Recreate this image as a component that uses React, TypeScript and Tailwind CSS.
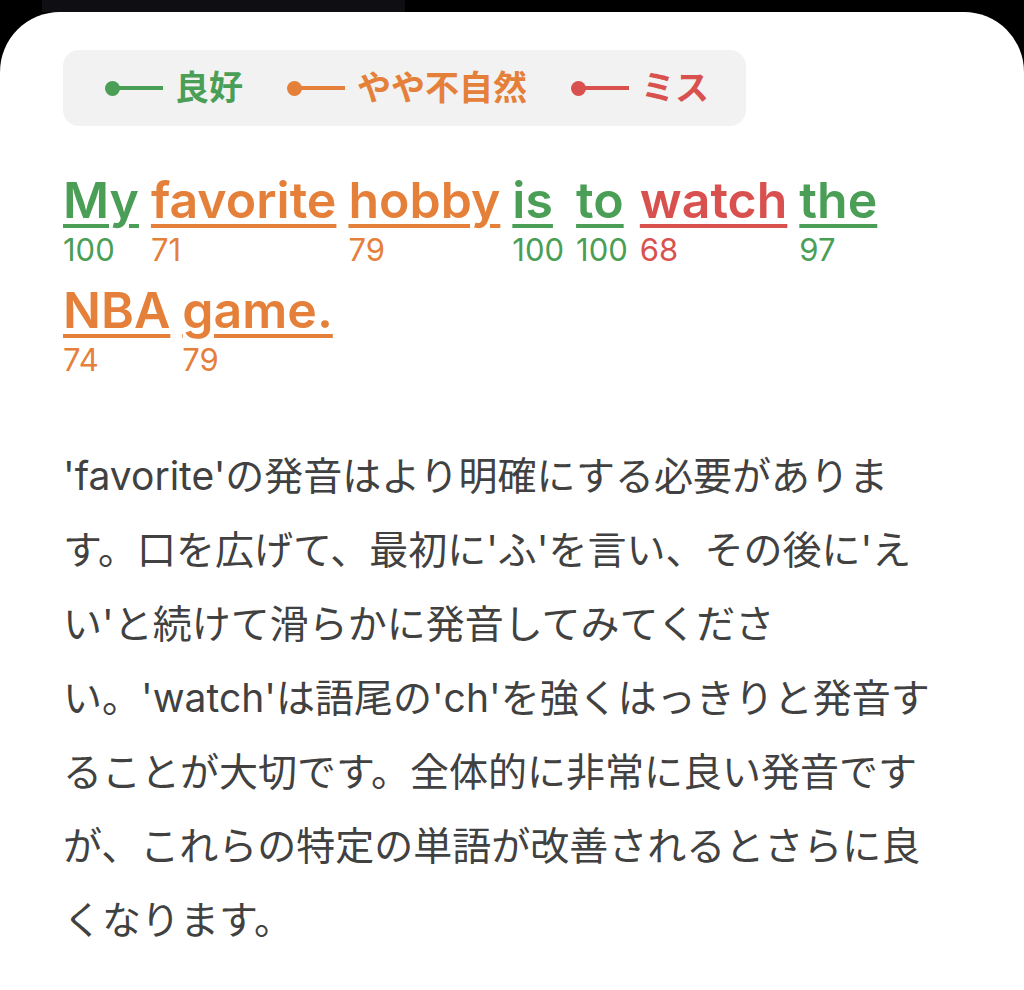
import React from 'react';

type Word = { text: string; score: number };

const words: Word[] = [
  { text: 'My', score: 100 },
  { text: 'favorite', score: 71 },
  { text: 'hobby', score: 79 },
  { text: 'is', score: 100 },
  { text: 'to', score: 100 },
  { text: 'watch', score: 68 },
  { text: 'the', score: 97 },
  { text: 'NBA', score: 74 },
  { text: 'game.', score: 79 },
];

// score -> colour class
function tone(score: number) {
  if (score >= 90) return 'text-[#4a9e55] decoration-[#4a9e55]';
  if (score >= 70) return 'text-[#e5803a] decoration-[#e5803a]';
  return 'text-[#d9514e] decoration-[#d9514e]';
}

function LegendItem({ label, color, dot }: { label: string; color: string; dot: string }) {
  return (
    <div className="flex items-center">
      <span className={`w-[15px] h-[15px] rounded-full ${dot}`} />
      <span className={`w-[44px] h-[4px] -ml-[1px] ${dot}`} />
      <span className={`ml-[12px] text-[34px] font-semibold leading-none ${color}`}>{label}</span>
    </div>
  );
}

export default function App() {
  return (
    <div
      className="w-[1024px] h-[990px] bg-black overflow-hidden flex flex-col"
      style={{ fontFamily: 'Inter, "Noto Sans CJK JP", sans-serif' }}
    >
      <div className="h-[12px] shrink-0 flex">
        <div className="ml-[42px] w-[363px] bg-[#0f0f13]" />
      </div>

      <div className="flex-1 bg-white rounded-t-[60px] pl-[63px] pt-[38px]">
        {/* legend */}
        <div className="w-[683px] h-[76px] bg-[#f2f2f2] rounded-[16px] flex items-center pl-[42px] gap-[44px]">
          <LegendItem label="良好" color="text-[#4a9e55]" dot="bg-[#4a9e55]" />
          <LegendItem label="やや不自然" color="text-[#e5803a]" dot="bg-[#e5803a]" />
          <LegendItem label="ミス" color="text-[#d9514e]" dot="bg-[#d9514e]" />
        </div>

        {/* words with scores */}
        <div className="mt-[46px] w-[900px] flex flex-wrap gap-x-[12px] gap-y-[16px]">
          {words.map((w, i) => (
            <div key={i} className={`flex flex-col items-start ${tone(w.score)}`}>
              <span className="text-[50px] font-semibold leading-[56px] underline decoration-[4px] underline-offset-[6px]">
                {w.text}
              </span>
              <span className="mt-[6px] text-[31px] leading-[32px]">{w.score}</span>
            </div>
          ))}
        </div>

        {/* feedback */}
        <p className="mt-[63px] w-[890px] text-[39px] leading-[74px] text-[#414141]">
          'favorite'の発音はより明確にする必要があります。口を広げて、最初に'ふ'を言い、その後に'えい'と続けて滑らかに発音してみてください。'watch'は語尾の'ch'を強くはっきりと発音することが大切です。全体的に非常に良い発音ですが、これらの特定の単語が改善されるとさらに良くなります。
        </p>
      </div>
    </div>
  );
}
